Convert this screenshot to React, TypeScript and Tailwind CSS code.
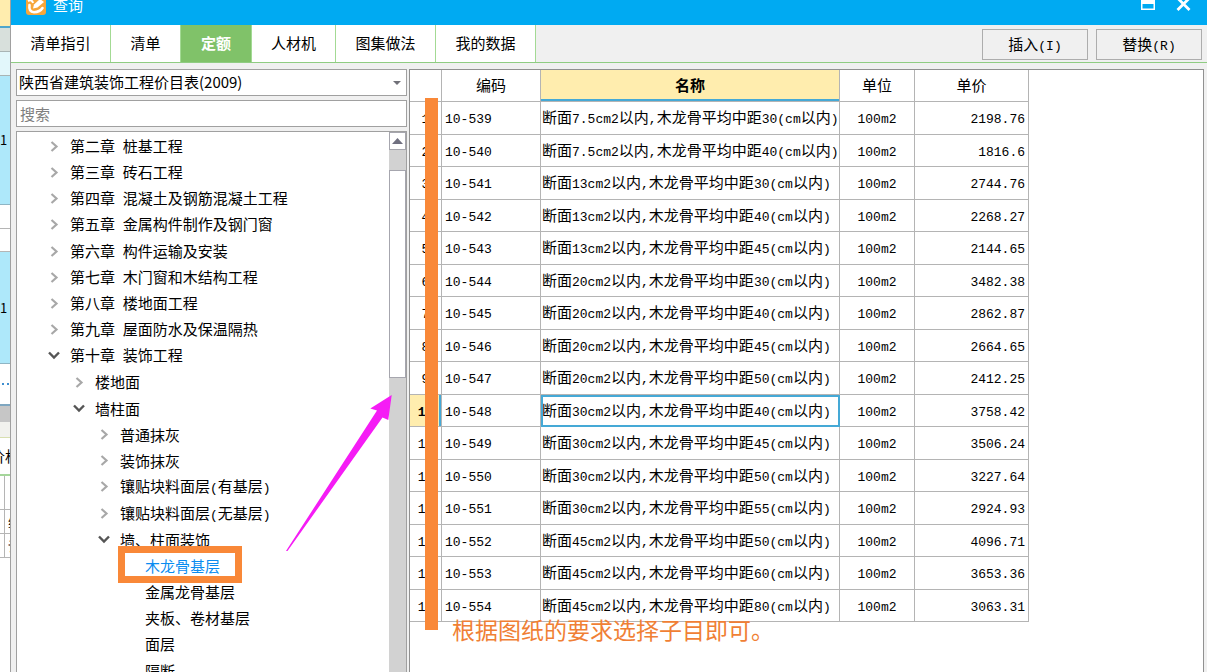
import React, { useState } from 'react';
import { clsx } from 'clsx';

interface TreeItem {
  label: string;
  level: 0 | 1 | 2 | 3;
  state: 'closed' | 'open' | 'leaf';
}

const TABS = [
  { label: '清单指引', width: 'w-[100px]' },
  { label: '清单', width: 'w-[70px]' },
  { label: '定额', width: 'w-[71px]' },
  { label: '人材机', width: 'w-[84px]' },
  { label: '图集做法', width: 'w-[100px]' },
  { label: '我的数据', width: 'w-[100px]' },
];

const TREE: TreeItem[] = [
  { label: '第二章 桩基工程', level: 0, state: 'closed' },
  { label: '第三章 砖石工程', level: 0, state: 'closed' },
  { label: '第四章 混凝土及钢筋混凝土工程', level: 0, state: 'closed' },
  { label: '第五章 金属构件制作及钢门窗', level: 0, state: 'closed' },
  { label: '第六章 构件运输及安装', level: 0, state: 'closed' },
  { label: '第七章 木门窗和木结构工程', level: 0, state: 'closed' },
  { label: '第八章 楼地面工程', level: 0, state: 'closed' },
  { label: '第九章 屋面防水及保温隔热', level: 0, state: 'closed' },
  { label: '第十章 装饰工程', level: 0, state: 'open' },
  { label: '楼地面', level: 1, state: 'closed' },
  { label: '墙柱面', level: 1, state: 'open' },
  { label: '普通抹灰', level: 2, state: 'closed' },
  { label: '装饰抹灰', level: 2, state: 'closed' },
  { label: '镶贴块料面层(有基层)', level: 2, state: 'closed' },
  { label: '镶贴块料面层(无基层)', level: 2, state: 'closed' },
  { label: '墙、柱面装饰', level: 2, state: 'open' },
  { label: '木龙骨基层', level: 3, state: 'leaf' },
  { label: '金属龙骨基层', level: 3, state: 'leaf' },
  { label: '夹板、卷材基层', level: 3, state: 'leaf' },
  { label: '面层', level: 3, state: 'leaf' },
  { label: '隔断', level: 3, state: 'leaf' },
];

const INDENT = ['pl-[29px]', 'pl-[54px]', 'pl-[79px]', 'pl-[104px]'];

const ROWS = [
  { code: '10-539', size: '7.5', gap: 30, price: '2198.76' },
  { code: '10-540', size: '7.5', gap: 40, price: '1816.6' },
  { code: '10-541', size: '13', gap: 30, price: '2744.76' },
  { code: '10-542', size: '13', gap: 40, price: '2268.27' },
  { code: '10-543', size: '13', gap: 45, price: '2144.65' },
  { code: '10-544', size: '20', gap: 30, price: '3482.38' },
  { code: '10-545', size: '20', gap: 40, price: '2862.87' },
  { code: '10-546', size: '20', gap: 45, price: '2664.65' },
  { code: '10-547', size: '20', gap: 50, price: '2412.25' },
  { code: '10-548', size: '30', gap: 40, price: '3758.42' },
  { code: '10-549', size: '30', gap: 45, price: '3506.24' },
  { code: '10-550', size: '30', gap: 50, price: '3227.64' },
  { code: '10-551', size: '30', gap: 55, price: '2924.93' },
  { code: '10-552', size: '45', gap: 50, price: '4096.71' },
  { code: '10-553', size: '45', gap: 60, price: '3653.36' },
  { code: '10-554', size: '45', gap: 80, price: '3063.31' },
];

// Half-width runs are set in a narrower monospace face than the Chinese text
function Mixed({ text }: { text: string }) {
  return (
    <>
      {text.split(/([\x20-\x7e]+)/).map((part, i) =>
        i % 2 ? (
          <span key={i} className="font-['Liberation_Mono',monospace] text-[13px] whitespace-pre">{part}</span>
        ) : (
          part
        )
      )}
    </>
  );
}

function Chevron({ state }: { state: TreeItem['state'] }) {
  if (state === 'leaf') return <span className="w-4 shrink-0" />;
  return (
    <svg width="16" height="14" viewBox="0 0 16 14" fill="none" className="shrink-0" aria-hidden="true">
      {state === 'open' ? (
        <path d="M3 3.5 L8 8.5 L13 3.5" stroke="#555" strokeWidth="2.4" />
      ) : (
        <path d="M5.5 2 L10.5 6.5 L5.5 11" stroke="#a8a8a8" strokeWidth="2.2" />
      )}
    </svg>
  );
}

function BackgroundStrip() {
  return (
    <div className="w-[10px] shrink-0 overflow-hidden bg-white text-[13px] text-black" aria-hidden="true">
      <div className="h-[26px] bg-[#ffedae]" />
      <div className="h-[2px] bg-[#4fa6cc]" />
      <div className="h-6 border-b border-[#a9b4b4] bg-[#d8e0dc]" />
      <div className="h-6 border-b border-[#a9b4b4] bg-[#e2f7fb]" />
      <div className="flex h-[129px] items-center border-b border-[#8fb5c4] bg-[#aee8fa]">1</div>
      <div className="h-6 border-b border-[#b5b5b5]" />
      <div className="h-[23px] border-b border-[#b5b5b5]" />
      <div className="flex h-28 items-center border-b border-[#8fb5c4] bg-[#aee8fa]">1</div>
      <div className="flex h-10 items-center gap-[3px] pl-[2px]">
        <span className="size-[2px] bg-[#3f8fd0]" />
        <span className="size-[2px] bg-[#3f8fd0]" />
      </div>
      <div className="h-[2px] bg-[#7ea6c0]" />
      <div className="h-4 bg-[#c6c6c6]" />
      <div className="h-4 border-b border-[#d8dfb0] bg-[#f2f2ee]" />
      <div className="flex h-[38px] items-center justify-center border-b-2 border-[#a5d69b] text-[15px]">
        <span className="whitespace-nowrap">价格</span>
      </div>
      <div className="h-[34px] border-b border-[#b5b5b5]">
        <div className="h-full w-[5px] border-r border-[#b5b5b5]" />
      </div>
      <div className="flex h-6 items-center border-b border-[#b5b5b5]">
        <div className="mr-[3px] h-full w-[5px] shrink-0 border-r border-[#b5b5b5]" />
        综
      </div>
      <div className="flex h-6 items-center border-b border-[#b5b5b5]">
        <div className="mr-[3px] h-full w-[5px] shrink-0 border-r border-[#b5b5b5]" />
        请
      </div>
    </div>
  );
}

function TitleBar() {
  return (
    <header className="flex h-[25px] shrink-0 items-start justify-between overflow-hidden bg-[#00aaf2] pr-4 pl-[15px] text-white">
      <div className="flex items-start gap-[7px]">
        <svg width="20" height="15" viewBox="0 0 20 15" aria-hidden="true">
          <rect x="0" y="-5" width="20" height="20" rx="3" fill="#f6a63a" />
          <path d="M3.5 5 Q2.5 12 8 12.2 Q14 12 16.5 8" stroke="#fff" strokeWidth="2.6" fill="none" strokeLinecap="round" />
          <path d="M2 1 Q6 -1 7 3" stroke="#fff" strokeWidth="2" fill="none" />
          <path d="M7 8.5 L8 4.5 L14 -1 L18 2 L11.5 7.5 Z" fill="#fff" />
        </svg>
        <h1 className="text-[15px] leading-[10px]">查询</h1>
      </div>
      <div className="flex items-start gap-[21px]">
        <button aria-label="最大化">
          <svg width="14" height="11" viewBox="0 0 14 11" className="block">
            <path d="M0 0 H14 V10 H0 Z M1.5 4 V8.5 H12.5 V4 Z" fill="#fff" fillRule="evenodd" />
          </svg>
        </button>
        <button aria-label="关闭">
          <svg width="15" height="11" viewBox="0 0 15 11" className="block">
            <path d="M1.5 -2 L13.5 10 M13.5 -2 L1.5 10" stroke="#fff" strokeWidth="2.8" />
          </svg>
        </button>
      </div>
    </header>
  );
}

export default function App() {
  const [tab, setTab] = useState('定额');
  const [current, setCurrent] = useState('木龙骨基层');

  return (
    <div className="relative flex h-screen overflow-hidden bg-[#f0f0f0] font-['Noto_Sans_CJK_SC',sans-serif] text-[15px] text-black">
      <BackgroundStrip />

      <main className="flex min-w-0 flex-1 flex-col border-l border-[#a0a0a0]">
        <TitleBar />

        {/* Tabs and actions */}
        <div className="flex h-[38px] shrink-0 items-stretch border-b border-[#8fcc82]">
          <nav className="flex">
            {TABS.map((t) => (
              <button
                key={t.label}
                onClick={() => setTab(t.label)}
                className={clsx(
                  'border-r border-[#a3da94]',
                  t.width,
                  tab === t.label ? 'bg-[#80c269] font-bold text-white' : 'bg-white'
                )}
              >
                {t.label}
              </button>
            ))}
          </nav>
          <div className="ml-auto flex gap-2 pt-1 pr-[5px]">
            <button className="h-[31px] w-[106px] border border-[#adadad]"><Mixed text="插入(I)" /></button>
            <button className="h-[31px] w-[106px] border border-[#adadad]"><Mixed text="替换(R)" /></button>
          </div>
        </div>

        <div className="flex min-h-0 flex-1 gap-[2px] pt-[6px] pr-[3px] pl-[5px]">
          {/* Chapter tree */}
          <aside className="flex w-[391px] shrink-0 flex-col">
            <div className="relative shrink-0">
              <select
                aria-label="定额库"
                className="block h-[27px] w-full appearance-none border border-[#a0a0a0] bg-white pl-[2px] outline-none"
              >
                <option>陕西省建筑装饰工程价目表(2009)</option>
              </select>
              <svg width="8" height="4" viewBox="0 0 8 4" className="pointer-events-none absolute top-3 right-[6px]" aria-hidden="true">
                <path d="M0 0 H8 L4 4 Z" fill="#707078" />
              </svg>
            </div>
            <input
              type="text"
              placeholder="搜索"
              aria-label="搜索"
              className="mt-1 block h-[27px] w-full shrink-0 border border-[#a0a0a0] bg-white pl-[3px] outline-none placeholder:text-[#808080]"
            />
            <div className="mt-1 flex min-h-0 flex-1 border border-b-0 border-[#a0a0a0] bg-white">
              <ul className="min-w-0 flex-1 overflow-hidden pt-[2px]">
                {TREE.map((item) => (
                  <li key={item.label} className="h-[26px] nth-[5n]:h-[27px]">
                    <button
                      onClick={() => setCurrent(item.label)}
                      className={clsx(
                        'flex h-full w-full items-center gap-2 whitespace-pre',
                        INDENT[item.level],
                        current === item.label && 'text-[#0a8cf0]'
                      )}
                    >
                      <Chevron state={item.state} />
                      <span><Mixed text={item.label} /></span>
                    </button>
                  </li>
                ))}
              </ul>
              <div className="flex w-[17px] flex-col bg-[#d2d2d2]">
                <button aria-label="向上滚动" className="flex h-[18px] items-center justify-center border border-[#a6a6ae] bg-white">
                  <svg width="11" height="6" viewBox="0 0 11 6"><path d="M0 6 L5.5 0 L11 6 Z" fill="#707080" /></svg>
                </button>
                <div className="mt-5 h-[208px] border border-[#a6a6ae] bg-white" />
              </div>
            </div>
          </aside>

          {/* Quota table */}
          <section className="min-w-0 flex-1 overflow-hidden border border-b-0 border-[#909090] bg-white">
            <table className="table-fixed border-separate border-spacing-0 whitespace-nowrap [&_td]:border-r [&_td]:border-b [&_td]:border-[#b4b4b4] [&_td]:p-0 [&_td]:pt-px [&_th]:border-r [&_th]:border-b [&_th]:border-[#b4b4b4] [&_th]:p-0">
              <colgroup>
                <col className="w-8" />
                <col className="w-[99px]" />
                <col className="w-[299px]" />
                <col className="w-[75px]" />
                <col className="w-[114px]" />
              </colgroup>
              <thead>
                <tr className="h-8">
                  <th />
                  <th className="font-normal">编码</th>
                  <th className="bg-[#ffedae] font-bold shadow-[inset_0_-2px_0_#45a9d6]">名称</th>
                  <th className="font-normal">单位</th>
                  <th className="font-normal">单价</th>
                </tr>
              </thead>
              <tbody className="leading-5">
                {ROWS.map((row, i) => {
                  const active = row.code === '10-548';
                  return (
                    <tr key={row.code} className="odd:h-[33px] even:h-8">
                      <td className={clsx('text-center', active && 'bg-[#ffedae] font-bold shadow-[inset_-2px_0_0_#45a9d6]')}>
                        <Mixed text={String(i + 1)} />
                      </td>
                      <td><span className="pl-[3px]"><Mixed text={row.code} /></span></td>
                      <td className={clsx(active && 'outline-2 -outline-offset-2 outline-[#45a9d6]')}>
                        <span className="pl-px"><Mixed text={`断面${row.size}cm2以内,木龙骨平均中距${row.gap}(cm以内)`} /></span>
                      </td>
                      <td className="text-center"><Mixed text="100m2" /></td>
                      <td className="text-right"><span className="pr-[3px]"><Mixed text={row.price} /></span></td>
                    </tr>
                  );
                })}
              </tbody>
            </table>
          </section>
        </div>
      </main>

      {/* Markup drawn over the window */}
      <div className="pointer-events-none absolute top-[98px] left-[425px] h-[532px] w-[13px] bg-[#f98838]" />
      <div className="pointer-events-none absolute top-[546px] left-[118px] h-[37px] w-[124px] border-[7px] border-[#f98838]" />
      <svg className="pointer-events-none absolute top-[390px] left-[280px]" width="120" height="166" viewBox="280 390 120 166" aria-hidden="true">
        <path d="M391.7 395 L370.3 408.5 L377 410.5 L286 551 L287.5 551 L382.5 417.5 L388.3 420 Z" fill="#f51cf5" />
      </svg>
      <p className="pointer-events-none absolute top-[612px] left-[452px] text-[23px] leading-[34px] text-[#f07f35]">
        根据图纸的要求选择子目即可。
      </p>
    </div>
  );
}
